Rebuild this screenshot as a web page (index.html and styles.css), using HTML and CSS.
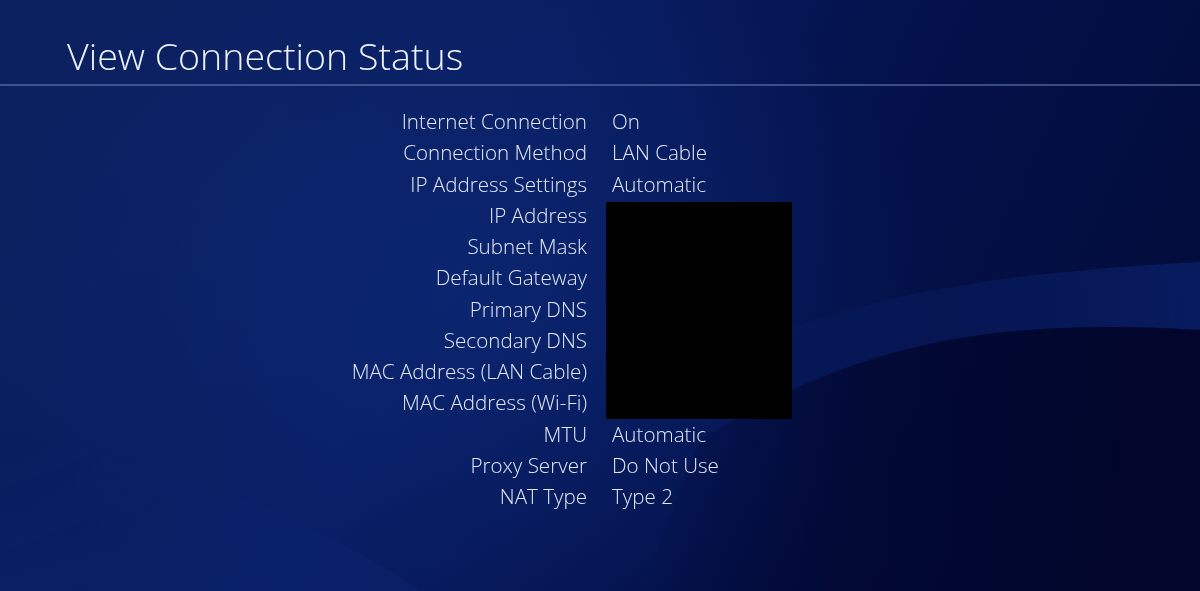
FILE: index.html
```html
<!DOCTYPE html>
<html lang="en">

<head>
    <meta charset="UTF-8">
    <meta name="viewport" content="width=device-width, initial-scale=1.0">
    <title>View Connection Status</title>
    <link rel="stylesheet" href="styles.css">
</head>

<body>
    <svg class="waves" viewBox="0 0 1200 591" preserveAspectRatio="none" aria-hidden="true">
        <defs>
            <linearGradient id="bandFade" x1="0" y1="0" x2="1" y2="0">
                <stop offset="0" stop-color="#0a2068" stop-opacity="0" />
                <stop offset="0.5" stop-color="#0a2068" stop-opacity="0.35" />
                <stop offset="1" stop-color="#0b236f" stop-opacity="0.7" />
            </linearGradient>
            <linearGradient id="lowFade" x1="0" y1="0" x2="1" y2="0">
                <stop offset="0" stop-color="#02062c" stop-opacity="0" />
                <stop offset="0.4" stop-color="#02062c" stop-opacity="0.65" />
                <stop offset="1" stop-color="#02052a" stop-opacity="0.9" />
            </linearGradient>
            <linearGradient id="leftSweep" x1="0" y1="0" x2="1" y2="1">
                <stop offset="0" stop-color="#12348a" stop-opacity="0" />
                <stop offset="1" stop-color="#12348a" stop-opacity="0.18" />
            </linearGradient>
        </defs>
        <!-- light band on the right -->
        <path d="M620 420 C760 320 900 278 1200 262 L1200 330 C1000 318 860 340 700 440 Z" fill="url(#bandFade)" />
        <!-- dark area under the band -->
        <path d="M640 591 L700 440 C860 340 1000 318 1200 330 L1200 591 Z" fill="url(#lowFade)" />
        <!-- faint sweep bottom left -->
        <path d="M0 430 C180 470 320 520 420 591 L0 591 Z" fill="url(#leftSweep)" />
    </svg>

    <header class="page-header">
        <h1>View Connection Status</h1>
    </header>

    <main class="status">
        <div class="status-list">
            <span class="label">Internet Connection</span><span class="value">On</span>
            <span class="label">Connection Method</span><span class="value">LAN Cable</span>
            <span class="label">IP Address Settings</span><span class="value">Automatic</span>
            <span class="label">IP Address</span><span class="redacted"></span>
            <span class="label">Subnet Mask</span>
            <span class="label">Default Gateway</span>
            <span class="label">Primary DNS</span>
            <span class="label">Secondary DNS</span>
            <span class="label">MAC Address (LAN Cable)</span>
            <span class="label">MAC Address (Wi-Fi)</span>
            <span class="label">MTU</span><span class="value">Automatic</span>
            <span class="label">Proxy Server</span><span class="value">Do Not Use</span>
            <span class="label">NAT Type</span><span class="value">Type 2</span>
        </div>
    </main>
</body>

</html>
```

FILE: styles.css
```css
* {
    box-sizing: border-box;
    margin: 0;
    padding: 0;
}

html,
body {
    height: 100%;
}

body {
    font-family: "Open Sans", "Noto Sans", sans-serif;
    font-weight: 300;
    color: #e3e9f4;
    overflow: hidden;
    background-color: #041245;
    background-image:
        radial-gradient(ellipse 480px 360px at 470px 300px, rgba(12, 42, 122, 0.6), rgba(12, 42, 122, 0) 100%),
        radial-gradient(ellipse 650px 400px at 180px 130px, rgba(14, 36, 100, 0.5), rgba(14, 36, 100, 0) 100%),
        linear-gradient(115deg, #0a1f5c 0%, #081d62 38%, #04114a 65%, #020a36 100%);
}

.waves {
    position: fixed;
    top: 0;
    left: 0;
    width: 100%;
    height: 100%;
    z-index: -1;
}

.page-header {
    padding: 32px 0 4px 67px;
    border-bottom: 2px solid rgba(110, 135, 190, 0.5);
}

.page-header h1 {
    font-size: 37.6px;
    font-weight: 300;
    line-height: 48px;
    color: #eef2fa;
}

.status {
    padding-top: 20px;
}

.status-list {
    display: grid;
    grid-template-columns: 587px auto;
    grid-auto-rows: 31.25px;
    column-gap: 25px;
    font-size: 20.6px;
    line-height: 31.25px;
}

.label {
    grid-column: 1;
    text-align: right;
    white-space: nowrap;
}

.value {
    grid-column: 2;
    white-space: nowrap;
}

/* blacked out addresses */
.redacted {
    grid-column: 2;
    grid-row: span 7;
    width: 186px;
    margin: 2px 0 0 -6px;
    background: #000;
}
```
